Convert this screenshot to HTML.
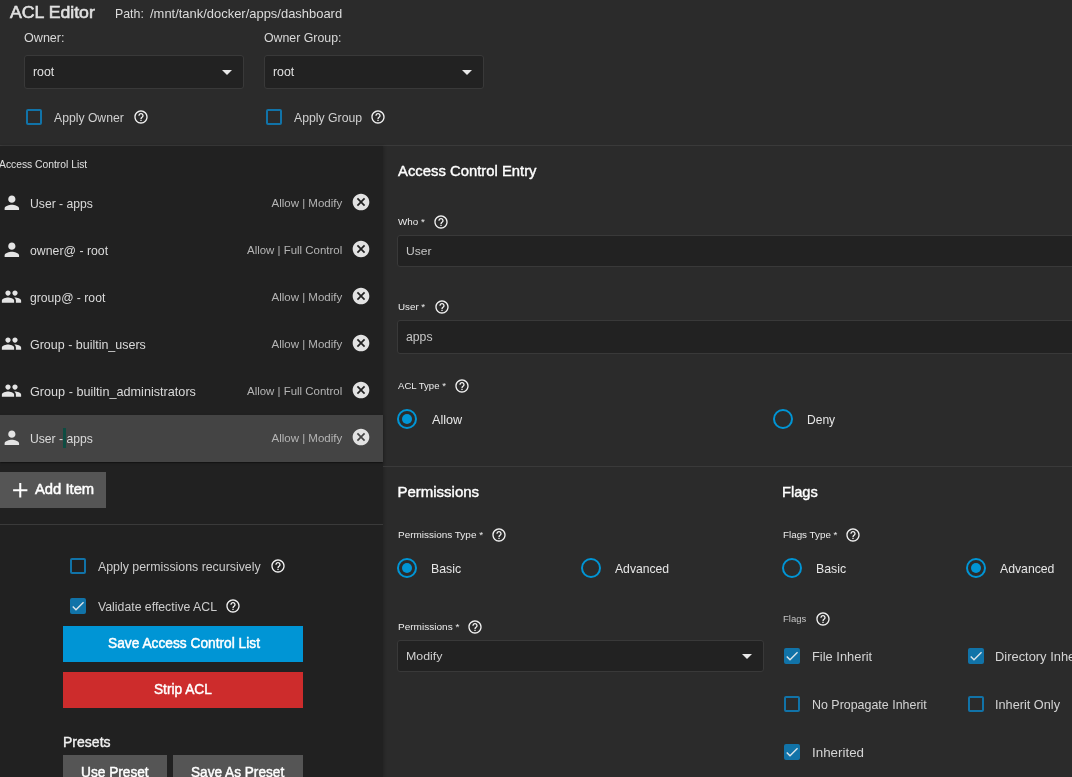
<!DOCTYPE html>
<html lang="en">
<head>
<meta charset="utf-8">
<title>ACL Editor</title>
<style>
*{box-sizing:border-box;margin:0;padding:0}
html,body{width:1072px;height:777px;overflow:hidden;background:#2b2b2b;}
body{position:relative;font-family:"Liberation Sans",sans-serif;color:#dcdcdc;font-size:13px;}
.t{position:absolute;white-space:nowrap;line-height:20px;height:20px;transform-origin:0 50%;}
#tx{position:absolute;left:0;top:0;width:1072px;height:777px;will-change:transform;}
.abs{position:absolute}
#left{position:absolute;left:0;top:146px;width:383px;height:631px;background:#212121;box-shadow:1px 0 3px rgba(0,0,0,0.22);}
.ln{position:absolute;height:1px;background:#3a3a3a;}
.inp{position:absolute;background:#222222;border:1px solid #393939;border-radius:3px;}
.arrow{position:absolute;width:0;height:0;border-left:5px solid transparent;border-right:5px solid transparent;border-top:5px solid #e8e8e8;}
.cb{position:absolute;width:16px;height:16px;border:2px solid #1173a8;border-radius:2px;}
.cb.on{background:#1173a8;}
.cb.on svg{position:absolute;left:-2px;top:-2px;}
.help{position:absolute;width:16px;height:16px;}
.ico{position:absolute;width:21.700px;height:21.700px;}
.x{position:absolute;width:20px;height:20px;}
.btn{position:absolute;}
.radio{position:absolute;width:20px;height:20px;border:2px solid #0095d5;border-radius:50%;}
.radio.on:after{content:"";position:absolute;left:3px;top:3px;width:10px;height:10px;border-radius:50%;background:#0095d5;}
</style>
</head>
<body>
<svg width="0" height="0" style="position:absolute">
<defs>
<symbol id="i-help" viewBox="0 0 24 24"><path fill="#f2f2f2" d="M11 18h2v-2h-2v2zm1-16C6.480 2 2 6.480 2 12s4.480 10 10 10 10-4.480 10-10S17.520 2 12 2zm0 18c-4.410 0-8-3.590-8-8s3.590-8 8-8 8 3.590 8 8-3.590 8-8 8zm0-14c-2.210 0-4 1.790-4 4h2c0-1.100.9-2 2-2s2 .9 2 2c0 2-3 1.750-3 5h2c0-2.250 3-2.500 3-5 0-2.210-1.790-4-4-4z"/></symbol>
<symbol id="i-person" viewBox="0 0 24 24"><path fill="#e4e4e4" d="M12 12c2.210 0 4-1.790 4-4s-1.790-4-4-4-4 1.790-4 4 1.790 4 4 4zm0 2c-2.670 0-8 1.340-8 4v2h16v-2c0-2.660-5.330-4-8-4z"/></symbol>
<symbol id="i-people" viewBox="0 0 24 24"><path fill="#e4e4e4" d="M16 11c1.660 0 2.990-1.340 2.990-3S17.660 5 16 5c-1.660 0-3 1.340-3 3s1.340 3 3 3zm-8 0c1.660 0 2.990-1.340 2.990-3S9.660 5 8 5C6.340 5 5 6.340 5 8s1.340 3 3 3zm0 2c-2.330 0-7 1.170-7 3.500V19h14v-2.500c0-2.330-4.670-3.500-7-3.500zm8 0c-.29 0-.62.020-.97.050 1.160.84 1.970 1.970 1.970 3.450V19h6v-2.500c0-2.330-4.670-3.500-7-3.500z"/></symbol>
<symbol id="i-cancel" viewBox="0 0 24 24"><path fill="#e2e2e2" d="M12 2C6.470 2 2 6.470 2 12s4.470 10 10 10 10-4.470 10-10S17.530 2 12 2zm5 13.590L15.590 17 12 13.410 8.410 17 7 15.590 10.590 12 7 8.410 8.410 7 12 10.590 15.590 7 17 8.410 13.410 12 17 15.590z"/></symbol>
<symbol id="i-check" viewBox="0 0 24 24"><path fill="none" stroke="#dbe4ea" stroke-width="2.100" d="M4.100 12.700 9 17.600 20.300 6.300"/></symbol>
</defs>
</svg>

<div class="ln" style="left:0;top:145px;width:1072px;"></div>
<div class="inp" style="left:24px;top:55px;width:220px;height:34px;"></div>
<div class="inp" style="left:264px;top:55px;width:220px;height:34px;"></div>
<div class="arrow" style="left:222.25px;top:69.5px;"></div>
<div class="arrow" style="left:462.25px;top:69.5px;"></div>
<div class="cb" style="left:26px;top:109px;"></div>
<div class="cb" style="left:266px;top:109px;"></div>
<svg class="help" style="left:133.00px;top:109.25px;" viewBox="0 0 24 24"><use href="#i-help"/></svg>
<svg class="help" style="left:370.25px;top:109.25px;" viewBox="0 0 24 24"><use href="#i-help"/></svg>
<div id="left"></div>
<div class="abs" style="left:0;top:415px;width:383px;height:47px;background:#444444;box-shadow:0 2px 1px -1px rgba(0,0,0,.2),0 1px 1px 0 rgba(0,0,0,.14),0 1px 3px 0 rgba(0,0,0,.12);"></div>
<svg class="ico" style="left:1px;top:191.6px;" viewBox="0 0 24 24"><use href="#i-person"/></svg>
<svg class="x" style="left:351px;top:192px;" viewBox="0 0 24 24"><use href="#i-cancel"/></svg>
<svg class="ico" style="left:1px;top:238.6px;" viewBox="0 0 24 24"><use href="#i-person"/></svg>
<svg class="x" style="left:351px;top:239px;" viewBox="0 0 24 24"><use href="#i-cancel"/></svg>
<svg class="ico" style="left:1px;top:286.1px;width:21px;height:21px;" viewBox="0 0 24 24"><use href="#i-people"/></svg>
<svg class="x" style="left:351px;top:286px;" viewBox="0 0 24 24"><use href="#i-cancel"/></svg>
<svg class="ico" style="left:1px;top:333.1px;width:21px;height:21px;" viewBox="0 0 24 24"><use href="#i-people"/></svg>
<svg class="x" style="left:351px;top:333px;" viewBox="0 0 24 24"><use href="#i-cancel"/></svg>
<svg class="ico" style="left:1px;top:380.1px;width:21px;height:21px;" viewBox="0 0 24 24"><use href="#i-people"/></svg>
<svg class="x" style="left:351px;top:380px;" viewBox="0 0 24 24"><use href="#i-cancel"/></svg>
<svg class="ico" style="left:1px;top:426.6px;" viewBox="0 0 24 24"><use href="#i-person"/></svg>
<svg class="x" style="left:351px;top:427px;" viewBox="0 0 24 24"><use href="#i-cancel"/></svg>
<div class="abs" style="left:63px;top:428px;width:3px;height:20px;background:#0e4c42;"></div>
<div class="btn" style="left:0;top:472px;width:106px;height:36px;background:#555555;"></div>
<svg class="abs" style="left:7.75px;top:478px;width:24.5px;height:24.5px" viewBox="0 0 24 24"><path fill="#fff" d="M19 13h-6v6h-2v-6H5v-2h6V5h2v6h6v2z"/></svg>
<div class="ln" style="left:0;top:524px;width:383px;"></div>
<div class="cb" style="left:70px;top:558px;"></div>
<div class="cb on" style="left:70px;top:598px;"><svg width="16" height="16" viewBox="0 0 24 24"><use href="#i-check"/></svg></div>
<svg class="help" style="left:270.10px;top:558.00px;" viewBox="0 0 24 24"><use href="#i-help"/></svg>
<svg class="help" style="left:225.10px;top:598.20px;" viewBox="0 0 24 24"><use href="#i-help"/></svg>
<div class="btn" style="left:63px;top:626px;width:240px;height:36px;background:#0095d5;"></div>
<div class="btn" style="left:63px;top:672px;width:240px;height:36px;background:#cd2c2c;"></div>
<div class="btn" style="left:63px;top:755px;width:104px;height:36px;background:#555555;"></div>
<div class="btn" style="left:173px;top:755px;width:130px;height:36px;background:#555555;"></div>
<div class="inp" style="left:397px;top:235px;width:700px;height:32px;"></div>
<div class="inp" style="left:397px;top:320px;width:700px;height:34px;"></div>
<div class="inp" style="left:397px;top:640px;width:367px;height:32px;"></div>
<div class="arrow" style="left:742.00px;top:653.5px;"></div>
<svg class="help" style="left:433.00px;top:214.00px;" viewBox="0 0 24 24"><use href="#i-help"/></svg>
<svg class="help" style="left:433.90px;top:299.00px;" viewBox="0 0 24 24"><use href="#i-help"/></svg>
<svg class="help" style="left:454.10px;top:378.00px;" viewBox="0 0 24 24"><use href="#i-help"/></svg>
<svg class="help" style="left:491.10px;top:527.00px;" viewBox="0 0 24 24"><use href="#i-help"/></svg>
<svg class="help" style="left:844.80px;top:527.00px;" viewBox="0 0 24 24"><use href="#i-help"/></svg>
<svg class="help" style="left:466.90px;top:619.00px;" viewBox="0 0 24 24"><use href="#i-help"/></svg>
<svg class="help" style="left:815.00px;top:611.00px;" viewBox="0 0 24 24"><use href="#i-help"/></svg>
<div class="radio on" style="left:397px;top:409px;"></div>
<div class="radio" style="left:773px;top:409px;"></div>
<div class="radio on" style="left:397px;top:558px;"></div>
<div class="radio" style="left:581px;top:558px;"></div>
<div class="radio" style="left:782px;top:558px;"></div>
<div class="radio on" style="left:966px;top:558px;"></div>
<div class="ln" style="left:383px;top:466px;width:689px;"></div>
<div class="cb on" style="left:784px;top:648px;"><svg width="16" height="16" viewBox="0 0 24 24"><use href="#i-check"/></svg></div>
<div class="cb on" style="left:968px;top:648px;"><svg width="16" height="16" viewBox="0 0 24 24"><use href="#i-check"/></svg></div>
<div class="cb" style="left:784px;top:696px;"></div>
<div class="cb" style="left:968px;top:696px;"></div>
<div class="cb on" style="left:784px;top:744px;"><svg width="16" height="16" viewBox="0 0 24 24"><use href="#i-check"/></svg></div>
<div id="tx">
<div class="t" style="left:9.50px;top:2px;font-size:16.5px;color:#e0e0e0;transform:scaleX(1.0715);-webkit-text-stroke:0.6px #e0e0e0;">ACL Editor</div>
<div class="t" style="left:115.27px;top:4px;font-size:13px;color:#dcdcdc;transform:scaleX(0.9511);">Path:</div>
<div class="t" style="left:150.00px;top:4px;font-size:13px;color:#dcdcdc;transform:scaleX(0.9956);">/mnt/tank/docker/apps/dashboard</div>
<div class="t" style="left:23.50px;top:28px;font-size:13px;color:#d8d8d8;transform:scaleX(0.9680);">Owner:</div>
<div class="t" style="left:264.06px;top:28px;font-size:13px;color:#d8d8d8;transform:scaleX(0.9488);">Owner Group:</div>
<div class="t" style="left:32.69px;top:62px;font-size:12px;color:#e0e0e0;transform:scaleX(1.0285);">root</div>
<div class="t" style="left:272.69px;top:62px;font-size:12px;color:#e0e0e0;transform:scaleX(1.0285);">root</div>
<div class="t" style="left:54.39px;top:108px;font-size:13px;color:#d0d0d0;transform:scaleX(0.9377);">Apply Owner</div>
<div class="t" style="left:294.40px;top:108px;font-size:13px;color:#d0d0d0;transform:scaleX(0.9424);">Apply Group</div>
<div class="t" style="left:-1.30px;top:154px;font-size:11px;color:#e0e0e0;transform:scaleX(0.9371);">Access Control List</div>
<div class="t" style="left:30.24px;top:194px;font-size:13px;color:#dadada;transform:scaleX(0.9367);">User - apps</div>
<div class="t" style="left:271.50px;top:193px;font-size:11.5px;color:#b4b4b4;">Allow | Modify</div>
<div class="t" style="left:30.07px;top:241px;font-size:13px;color:#dadada;transform:scaleX(0.9456);">owner@ - root</div>
<div class="t" style="left:247.25px;top:240px;font-size:11.5px;color:#b4b4b4;transform:scaleX(0.9952);">Allow | Full Control</div>
<div class="t" style="left:30.17px;top:288px;font-size:13px;color:#dadada;transform:scaleX(0.9364);">group@ - root</div>
<div class="t" style="left:271.50px;top:287px;font-size:11.5px;color:#b4b4b4;">Allow | Modify</div>
<div class="t" style="left:29.60px;top:335px;font-size:13px;color:#dadada;transform:scaleX(0.9597);">Group - builtin_users</div>
<div class="t" style="left:271.50px;top:334px;font-size:11.5px;color:#b4b4b4;">Allow | Modify</div>
<div class="t" style="left:29.68px;top:382px;font-size:13px;color:#dadada;transform:scaleX(0.9731);">Group - builtin_administrators</div>
<div class="t" style="left:247.25px;top:381px;font-size:11.5px;color:#b4b4b4;transform:scaleX(0.9952);">Allow | Full Control</div>
<div class="t" style="left:30.24px;top:429px;font-size:13px;color:#dadada;transform:scaleX(0.9354);">User - apps</div>
<div class="t" style="left:271.50px;top:428px;font-size:11.5px;color:#b4b4b4;">Allow | Modify</div>
<div class="t" style="left:35.40px;top:479px;font-size:15.5px;color:#ffffff;transform:scaleX(0.9538);-webkit-text-stroke:0.5px #ffffff;">Add Item</div>
<div class="t" style="left:98.42px;top:557px;font-size:13px;color:#cccccc;transform:scaleX(0.9500);">Apply permissions recursively</div>
<div class="t" style="left:98.49px;top:597px;font-size:13px;color:#cccccc;transform:scaleX(0.9444);">Validate effective ACL</div>
<div class="t" style="left:108.43px;top:633px;font-size:15.5px;color:#ffffff;transform:scaleX(0.8865);-webkit-text-stroke:0.5px #ffffff;">Save Access Control List</div>
<div class="t" style="left:154.22px;top:679px;font-size:15.5px;color:#ffffff;transform:scaleX(0.8820);-webkit-text-stroke:0.5px #ffffff;">Strip ACL</div>
<div class="t" style="left:63.10px;top:732px;font-size:15px;color:#f0f0f0;transform:scaleX(0.9347);-webkit-text-stroke:0.4px #f0f0f0;">Presets</div>
<div class="t" style="left:80.83px;top:762px;font-size:15.5px;color:#ffffff;transform:scaleX(0.8825);-webkit-text-stroke:0.5px #ffffff;">Use Preset</div>
<div class="t" style="left:191.32px;top:762px;font-size:15.5px;color:#ffffff;transform:scaleX(0.8792);-webkit-text-stroke:0.5px #ffffff;">Save As Preset</div>
<div class="t" style="left:397.74px;top:161px;font-size:15px;color:#ffffff;transform:scaleX(0.9891);-webkit-text-stroke:0.4px #ffffff;">Access Control Entry</div>
<div class="t" style="left:398.32px;top:212px;font-size:9.5px;color:#ececec;transform:scaleX(1.0318);">Who *</div>
<div class="t" style="left:405.94px;top:241px;font-size:11px;color:#c6c6c6;transform:scaleX(1.1020);font-family:"DejaVu Sans",sans-serif;">User</div>
<div class="t" style="left:397.73px;top:297px;font-size:9.5px;color:#ececec;transform:scaleX(1.0289);">User *</div>
<div class="t" style="left:405.88px;top:327px;font-size:12px;color:#c6c6c6;transform:scaleX(1.0207);">apps</div>
<div class="t" style="left:398.42px;top:376px;font-size:9.5px;color:#ececec;transform:scaleX(1.0069);">ACL Type *</div>
<div class="t" style="left:431.72px;top:410px;font-size:13px;color:#e6e6e6;transform:scaleX(0.9716);">Allow</div>
<div class="t" style="left:806.73px;top:410px;font-size:13px;color:#e6e6e6;transform:scaleX(0.9269);">Deny</div>
<div class="t" style="left:397.40px;top:482px;font-size:15px;color:#ffffff;-webkit-text-stroke:0.4px #ffffff;">Permissions</div>
<div class="t" style="left:781.62px;top:482px;font-size:15px;color:#ffffff;transform:scaleX(0.9735);-webkit-text-stroke:0.4px #ffffff;">Flags</div>
<div class="t" style="left:397.61px;top:525px;font-size:9.5px;color:#ececec;transform:scaleX(1.0484);">Permissions Type *</div>
<div class="t" style="left:782.60px;top:525px;font-size:9.5px;color:#ececec;transform:scaleX(1.0341);">Flags Type *</div>
<div class="t" style="left:430.64px;top:559px;font-size:13px;color:#e6e6e6;transform:scaleX(0.9486);">Basic</div>
<div class="t" style="left:614.76px;top:559px;font-size:13px;color:#e6e6e6;transform:scaleX(0.9361);">Advanced</div>
<div class="t" style="left:815.54px;top:559px;font-size:13px;color:#e6e6e6;transform:scaleX(0.9486);">Basic</div>
<div class="t" style="left:999.59px;top:559px;font-size:13px;color:#e6e6e6;transform:scaleX(0.9412);">Advanced</div>
<div class="t" style="left:397.61px;top:617px;font-size:9.5px;color:#ececec;transform:scaleX(1.0564);">Permissions *</div>
<div class="t" style="left:782.51px;top:609px;font-size:9.5px;color:#c4c4c4;transform:scaleX(1.0040);">Flags</div>
<div class="t" style="left:406.16px;top:646px;font-size:11px;color:#d0d0d0;transform:scaleX(1.1242);font-family:"DejaVu Sans",sans-serif;">Modify</div>
<div class="t" style="left:811.79px;top:647px;font-size:13px;color:#d4d4d4;transform:scaleX(0.9913);">File Inherit</div>
<div class="t" style="left:994.99px;top:647px;font-size:13px;color:#d4d4d4;transform:scaleX(0.9913);">Directory Inherit</div>
<div class="t" style="left:811.83px;top:695px;font-size:13px;color:#d4d4d4;transform:scaleX(0.9564);">No Propagate Inherit</div>
<div class="t" style="left:995.01px;top:695px;font-size:13px;color:#d4d4d4;transform:scaleX(0.9777);">Inherit Only</div>
<div class="t" style="left:811.76px;top:743px;font-size:13px;color:#d4d4d4;transform:scaleX(1.0277);">Inherited</div>
</div>
</body>
</html>
